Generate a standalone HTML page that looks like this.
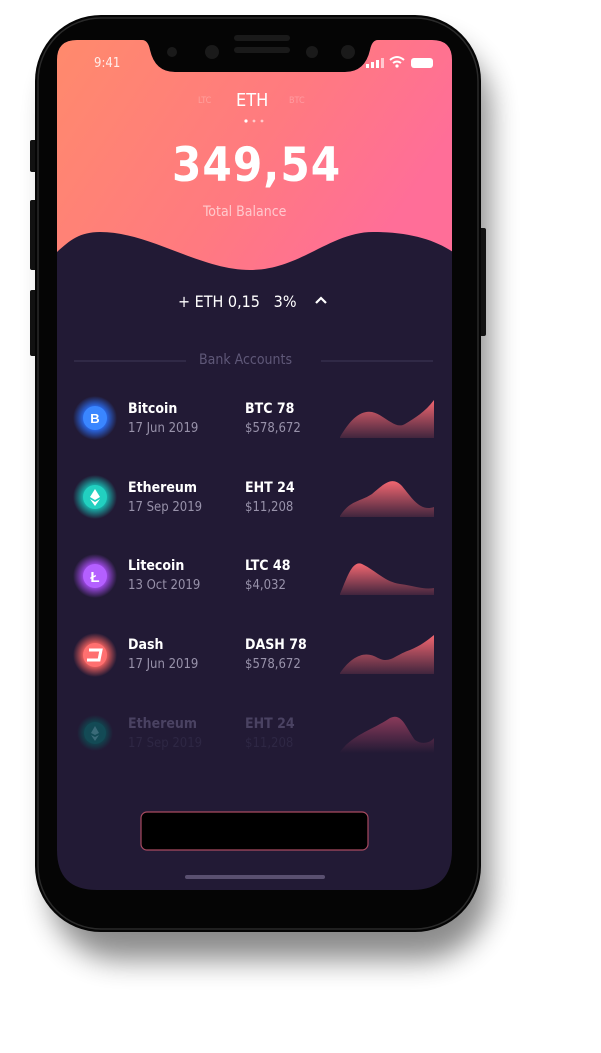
<!DOCTYPE html>
<html><head><meta charset="utf-8"><style>
html,body{margin:0;padding:0;background:#fff;width:601px;height:1053px;overflow:hidden;font-family:"DejaVu Sans Condensed","Liberation Sans",sans-serif}
.t{position:absolute;white-space:nowrap}
</style></head><body>
<svg width="601" height="1053" style="position:absolute;left:0;top:0">
<defs>
<filter id="sh" x="-30%" y="-20%" width="160%" height="150%"><feGaussianBlur stdDeviation="14"/></filter>
<linearGradient id="g" x1="0" y1="0" x2="1" y2="0.4"><stop offset="0" stop-color="#ff8a6c"/><stop offset="0.6" stop-color="#ff7a80"/><stop offset="1" stop-color="#ff6e98"/></linearGradient>
<linearGradient id="cg" x1="0" y1="0" x2="0" y2="1"><stop offset="0" stop-color="#f26670"/><stop offset="1" stop-color="#f26670" stop-opacity="0.15"/></linearGradient>
<linearGradient id="cg2" x1="0" y1="0" x2="0" y2="1"><stop offset="0" stop-color="#8a3a5a"/><stop offset="1" stop-color="#8a3a5a" stop-opacity="0"/></linearGradient>
<radialGradient id="b1"><stop offset="0.5" stop-color="#2a6cf0"/><stop offset="1" stop-color="#2a6cf0" stop-opacity="0"/></radialGradient>
<radialGradient id="b2"><stop offset="0.5" stop-color="#18b8b0"/><stop offset="1" stop-color="#18b8b0" stop-opacity="0"/></radialGradient>
<radialGradient id="b3"><stop offset="0.5" stop-color="#a04ae8"/><stop offset="1" stop-color="#a04ae8" stop-opacity="0"/></radialGradient>
<radialGradient id="b4"><stop offset="0.5" stop-color="#f0605e"/><stop offset="1" stop-color="#f0605e" stop-opacity="0"/></radialGradient>
<radialGradient id="b5"><stop offset="0.5" stop-color="#0f4a52"/><stop offset="1" stop-color="#0f4a52" stop-opacity="0"/></radialGradient>
<clipPath id="sc"><path d="M57 60 Q57 40 77 40 L142 40 Q148 40 150 50 Q155 72 175 72 L345 72 Q365 72 370 50 Q372 40 378 40 L432 40 Q452 40 452 60 L452 850 Q452 890 412 890 L97 890 Q57 890 57 850 Z"/></clipPath>
</defs>
<rect x="50" y="40" width="440" height="920" rx="70" fill="#000" opacity="0.45" filter="url(#sh)"/>
<rect x="30" y="140" width="8" height="32" rx="2" fill="#111"/>
<rect x="30" y="200" width="8" height="70" rx="2" fill="#111"/>
<rect x="30" y="290" width="8" height="66" rx="2" fill="#111"/>
<rect x="478" y="228" width="8" height="108" rx="2" fill="#111"/>
<rect x="35" y="15" width="446" height="917" rx="66" fill="#050505"/>
<rect x="38" y="18" width="440" height="911" rx="63" fill="none" stroke="#2a2a2a" stroke-width="1.5"/>
<g clip-path="url(#sc)">
<rect x="57" y="38" width="396" height="860" fill="#221a35"/>
<rect x="57" y="38" width="396" height="240" fill="url(#g)"/>
<path d="M57 252 C70 240 80 232 100 232 C150 232 200 270 250 270 C300 270 330 232 373 232 C410 232 435 240 453 252 L453 300 L57 300 Z" fill="#221a35"/>
</g>
<!-- notch details -->
<circle cx="172" cy="52" r="5" fill="#1a1a1a"/><circle cx="212" cy="52" r="7" fill="#1a1a1a"/>
<circle cx="312" cy="52" r="6" fill="#1a1a1a"/><circle cx="348" cy="52" r="7" fill="#1a1a1a"/>
<rect x="234" y="35" width="56" height="6" rx="3" fill="#1a1a1a"/><rect x="234" y="47" width="56" height="6" rx="3" fill="#1a1a1a"/>
<!-- status icons -->
<rect x="366" y="64" width="3" height="4" fill="#fff"/><rect x="371" y="62" width="3" height="6" fill="#fff"/><rect x="376" y="60" width="3" height="8" fill="#fff"/><rect x="381" y="58" width="3" height="10" fill="#fff" opacity=".6"/>
<path d="M390 60 Q397 54 404 60 M393 63 Q397 60 401 63" stroke="#fff" stroke-width="2" fill="none"/><circle cx="397" cy="66" r="1.6" fill="#fff"/>
<rect x="411" y="58" width="22" height="10" rx="3" fill="#fff"/>
<!-- dots -->
<circle cx="246" cy="121" r="1.6" fill="#fff"/><circle cx="254" cy="121" r="1.4" fill="#fff" opacity=".6"/><circle cx="262" cy="121" r="1.4" fill="#fff" opacity=".6"/>
<path d="M316 303 L321 298 L326 303" stroke="#fff" stroke-width="2.2" fill="none"/>
<line x1="74" y1="361" x2="186" y2="361" stroke="#3a3350" stroke-width="1.2"/>
<line x1="321" y1="361" x2="433" y2="361" stroke="#3a3350" stroke-width="1.2"/>
<!-- icons -->
<circle cx="95" cy="418" r="22" fill="url(#b1)"/><circle cx="95" cy="418" r="12" fill="#3a86ff"/>
<circle cx="95" cy="497" r="22" fill="url(#b2)"/><circle cx="95" cy="497" r="12" fill="#22d0c0"/>
<circle cx="95" cy="576" r="22" fill="url(#b3)"/><circle cx="95" cy="576" r="12" fill="#b460ff"/>
<circle cx="95" cy="655" r="22" fill="url(#b4)"/><circle cx="95" cy="655" r="12" fill="#ff7070"/>
<circle cx="95" cy="733" r="18" fill="url(#b5)"/><circle cx="95" cy="733" r="11" fill="#134a55"/>
<text x="95" y="423" fill="#fff" font-size="13" font-weight="bold" text-anchor="middle" font-family="Liberation Sans">B</text>
<path d="M95 489 L100 497 L95 500 L90 497 Z M90 499 L95 502 L100 499 L95 506 Z" fill="#fff"/>
<text x="95" y="582" fill="#fff" font-size="15" font-weight="bold" text-anchor="middle" font-family="Liberation Sans">Ł</text>
<path d="M89 650 L101 650 L99 660 L87 660" stroke="#fff" stroke-width="3" fill="none"/>
<path d="M95 726 L99 733 L95 735 L91 733 Z M91 735 L95 737 L99 735 L95 741 Z" fill="#3a6a78"/>
<!-- charts -->
<path d="M340 437 C350 420 360 410 372 412 C385 415 395 430 405 424 C415 418 425 412 434 400 L434 438 L340 438 Z" fill="url(#cg)"/>
<path d="M340 516 C350 500 360 502 372 494 C385 483 392 476 402 486 C412 498 420 512 434 507 L434 517 L340 517 Z" fill="url(#cg)"/>
<path d="M340 594 C347 578 352 560 362 564 C375 570 385 582 400 584 C415 586 424 590 434 588 L434 595 L340 595 Z" fill="url(#cg)"/>
<path d="M340 673 C352 656 365 650 378 658 C390 664 395 655 410 650 C420 646 428 640 434 635 L434 674 L340 674 Z" fill="url(#cg)"/>
<path d="M340 752 C352 735 372 730 390 718 C402 712 406 728 415 740 C422 745 430 743 434 738 L434 753 L340 753 Z" fill="url(#cg2)"/>
<!-- button -->
<rect x="141" y="812" width="227" height="38" rx="6" fill="#000" stroke="#a84a60" stroke-width="1.2"/>
<rect x="185" y="875" width="140" height="4" rx="2" fill="#5a5070"/>
</svg>
<div class="t" style="left:94px;top:56px;color:#fff;font-size:13px;opacity:.85">9:41</div>
<div class="t" style="left:198px;top:96px;color:#fff;font-size:9px;opacity:.25">LTC</div>
<div class="t" style="left:236px;top:90px;color:#fff;font-size:18px">ETH</div>
<div class="t" style="left:289px;top:96px;color:#fff;font-size:9px;opacity:.25">BTC</div>
<div class="t" style="left:172px;top:138px;color:#fff;font-size:47px;font-weight:bold;letter-spacing:1px">349,54</div>
<div class="t" style="left:203px;top:204px;color:#fff;font-size:14px;opacity:.6">Total Balance</div>
<div class="t" style="left:178px;top:292px;color:#fff;font-size:16px">+ ETH 0,15 &nbsp;&nbsp;3%</div>
<div class="t" style="left:199px;top:352px;color:#5f5878;font-size:14px">Bank Accounts</div>

<div class="t" style="left:128px;top:401px;color:#fff;font-size:14px;font-weight:bold">Bitcoin</div>
<div class="t" style="left:128px;top:421px;color:#9892aa;font-size:13px">17 Jun 2019</div>
<div class="t" style="left:245px;top:401px;color:#fff;font-size:14px;font-weight:bold">BTC 78</div>
<div class="t" style="left:245px;top:421px;color:#9892aa;font-size:13px">$578,672</div>

<div class="t" style="left:128px;top:480px;color:#fff;font-size:14px;font-weight:bold">Ethereum</div>
<div class="t" style="left:128px;top:500px;color:#9892aa;font-size:13px">17 Sep 2019</div>
<div class="t" style="left:245px;top:480px;color:#fff;font-size:14px;font-weight:bold">EHT 24</div>
<div class="t" style="left:245px;top:500px;color:#9892aa;font-size:13px">$11,208</div>

<div class="t" style="left:128px;top:558px;color:#fff;font-size:14px;font-weight:bold">Litecoin</div>
<div class="t" style="left:128px;top:578px;color:#9892aa;font-size:13px">13 Oct 2019</div>
<div class="t" style="left:245px;top:558px;color:#fff;font-size:14px;font-weight:bold">LTC 48</div>
<div class="t" style="left:245px;top:578px;color:#9892aa;font-size:13px">$4,032</div>

<div class="t" style="left:128px;top:637px;color:#fff;font-size:14px;font-weight:bold">Dash</div>
<div class="t" style="left:128px;top:657px;color:#9892aa;font-size:13px">17 Jun 2019</div>
<div class="t" style="left:245px;top:637px;color:#fff;font-size:14px;font-weight:bold">DASH 78</div>
<div class="t" style="left:245px;top:657px;color:#9892aa;font-size:13px">$578,672</div>

<div class="t" style="left:128px;top:716px;color:#4a4262;font-size:14px;font-weight:bold">Ethereum</div>
<div class="t" style="left:128px;top:736px;color:#2e2744;font-size:13px">17 Sep 2019</div>
<div class="t" style="left:245px;top:716px;color:#4a4262;font-size:14px;font-weight:bold">EHT 24</div>
<div class="t" style="left:245px;top:736px;color:#2e2744;font-size:13px">$11,208</div>
</body></html>
